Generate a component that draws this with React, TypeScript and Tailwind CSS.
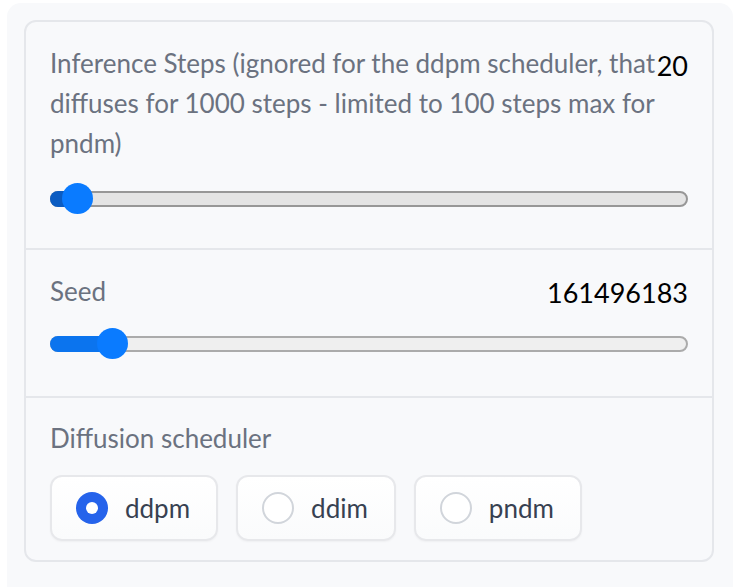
import { useState } from "react";

const FONT = "font-['Lato','Noto_Sans',sans-serif]";

const SCHEDULERS = ["ddpm", "ddim", "pndm"] as const;

function Slider({
  fraction,
  fillClass,
  trackClass,
}: {
  fraction: number;
  fillClass: string;
  trackClass: string;
}) {
  // thumb is 31px wide, travel runs over the track width minus the thumb
  const left = `calc(${fraction} * (100% - 31px))`;
  const fill = `calc(${fraction} * (100% - 31px) + 15px)`;

  return (
    <div className="relative flex h-[31px] items-center">
      <div className={`h-[16px] w-full rounded-full border-2 ${trackClass}`} />
      <div
        className={`absolute left-0 top-1/2 h-[16px] -translate-y-1/2 rounded-l-full ${fillClass}`}
        style={{ width: fill }}
      />
      <div
        className="absolute top-0 size-[31px] rounded-full bg-[#0a7bff]"
        style={{ left }}
      />
    </div>
  );
}

function Radio({
  label,
  checked,
  onClick,
}: {
  label: string;
  checked: boolean;
  onClick: () => void;
}) {
  return (
    <button
      type="button"
      onClick={onClick}
      className="flex h-[66px] items-center gap-[17px] rounded-[12px] border-2 border-[#e7e8eb] bg-gradient-to-b from-white to-[#fafbfc] pl-[24px] pr-[26px] shadow-[0_1px_2px_rgba(0,0,0,0.04)]"
    >
      <span
        className={`flex size-[32px] items-center justify-center rounded-full ${checked ? "bg-[#2563eb]" : "border-2 border-[#d1d5db] bg-white"
          }`}
      >
        {checked && <span className="size-[12px] rounded-full bg-white" />}
      </span>
      <span className="text-[26px] leading-none text-[#374151]">{label}</span>
    </button>
  );
}

export default function App() {
  const [scheduler, setScheduler] = useState<string>("ddpm");

  return (
    <div className={`h-[587px] w-[739px] overflow-hidden bg-white ${FONT}`}>
      <div className="ml-[7px] mt-[3px] h-[600px] w-[726px] rounded-t-[14px] bg-[#f8f9fb] pl-[17px] pr-[19px] pt-[17px]">
        <div className="h-[542px] overflow-hidden rounded-[12px] border-2 border-[#e5e7eb] bg-[#f8f9fb]">
          {/* inference steps */}
          <div className="h-[226px] px-[24px] pt-[21px]">
            <div className="flex items-start justify-between">
              <p className="flex-1 text-[26px] leading-[40px] text-[#6b7280]">
                Inference Steps (ignored for the ddpm scheduler, that diffuses for 1000 steps - limited to 100 steps max for pndm)
              </p>
              <span className="pt-[3px] text-[27px] leading-[40px] text-black">20</span>
            </div>
            <div className="mt-[20px]">
              <Slider
                fraction={0.02}
                fillClass="bg-[#0b5cc2]"
                trackClass="border-[#979797] bg-[#e4e4e4]"
              />
            </div>
          </div>

          <div className="h-[2px] bg-[#e5e7eb]" />

          {/* seed */}
          <div className="h-[146px] px-[24px] pt-[18px]">
            <div className="flex items-center justify-between">
              <span className="text-[26px] leading-[40px] text-[#6b7280]">Seed</span>
              <span className="pt-[5px] text-[27px] leading-[40px] text-black">161496183</span>
            </div>
            <div className="mt-[15px]">
              <Slider
                fraction={0.077}
                fillClass="bg-[#0b74ee]"
                trackClass="border-[#ababab] bg-[#efefef]"
              />
            </div>
          </div>

          <div className="h-[2px] bg-[#e5e7eb]" />

          {/* scheduler */}
          <div className="px-[24px] pt-[20px]">
            <span className="text-[26px] leading-[40px] text-[#6b7280]">Diffusion scheduler</span>
            <div className="mt-[17px] flex gap-[18px]">
              {SCHEDULERS.map((s) => (
                <Radio
                  key={s}
                  label={s}
                  checked={scheduler === s}
                  onClick={() => setScheduler(s)}
                />
              ))}
            </div>
          </div>
        </div>
      </div>
    </div>
  );
}
